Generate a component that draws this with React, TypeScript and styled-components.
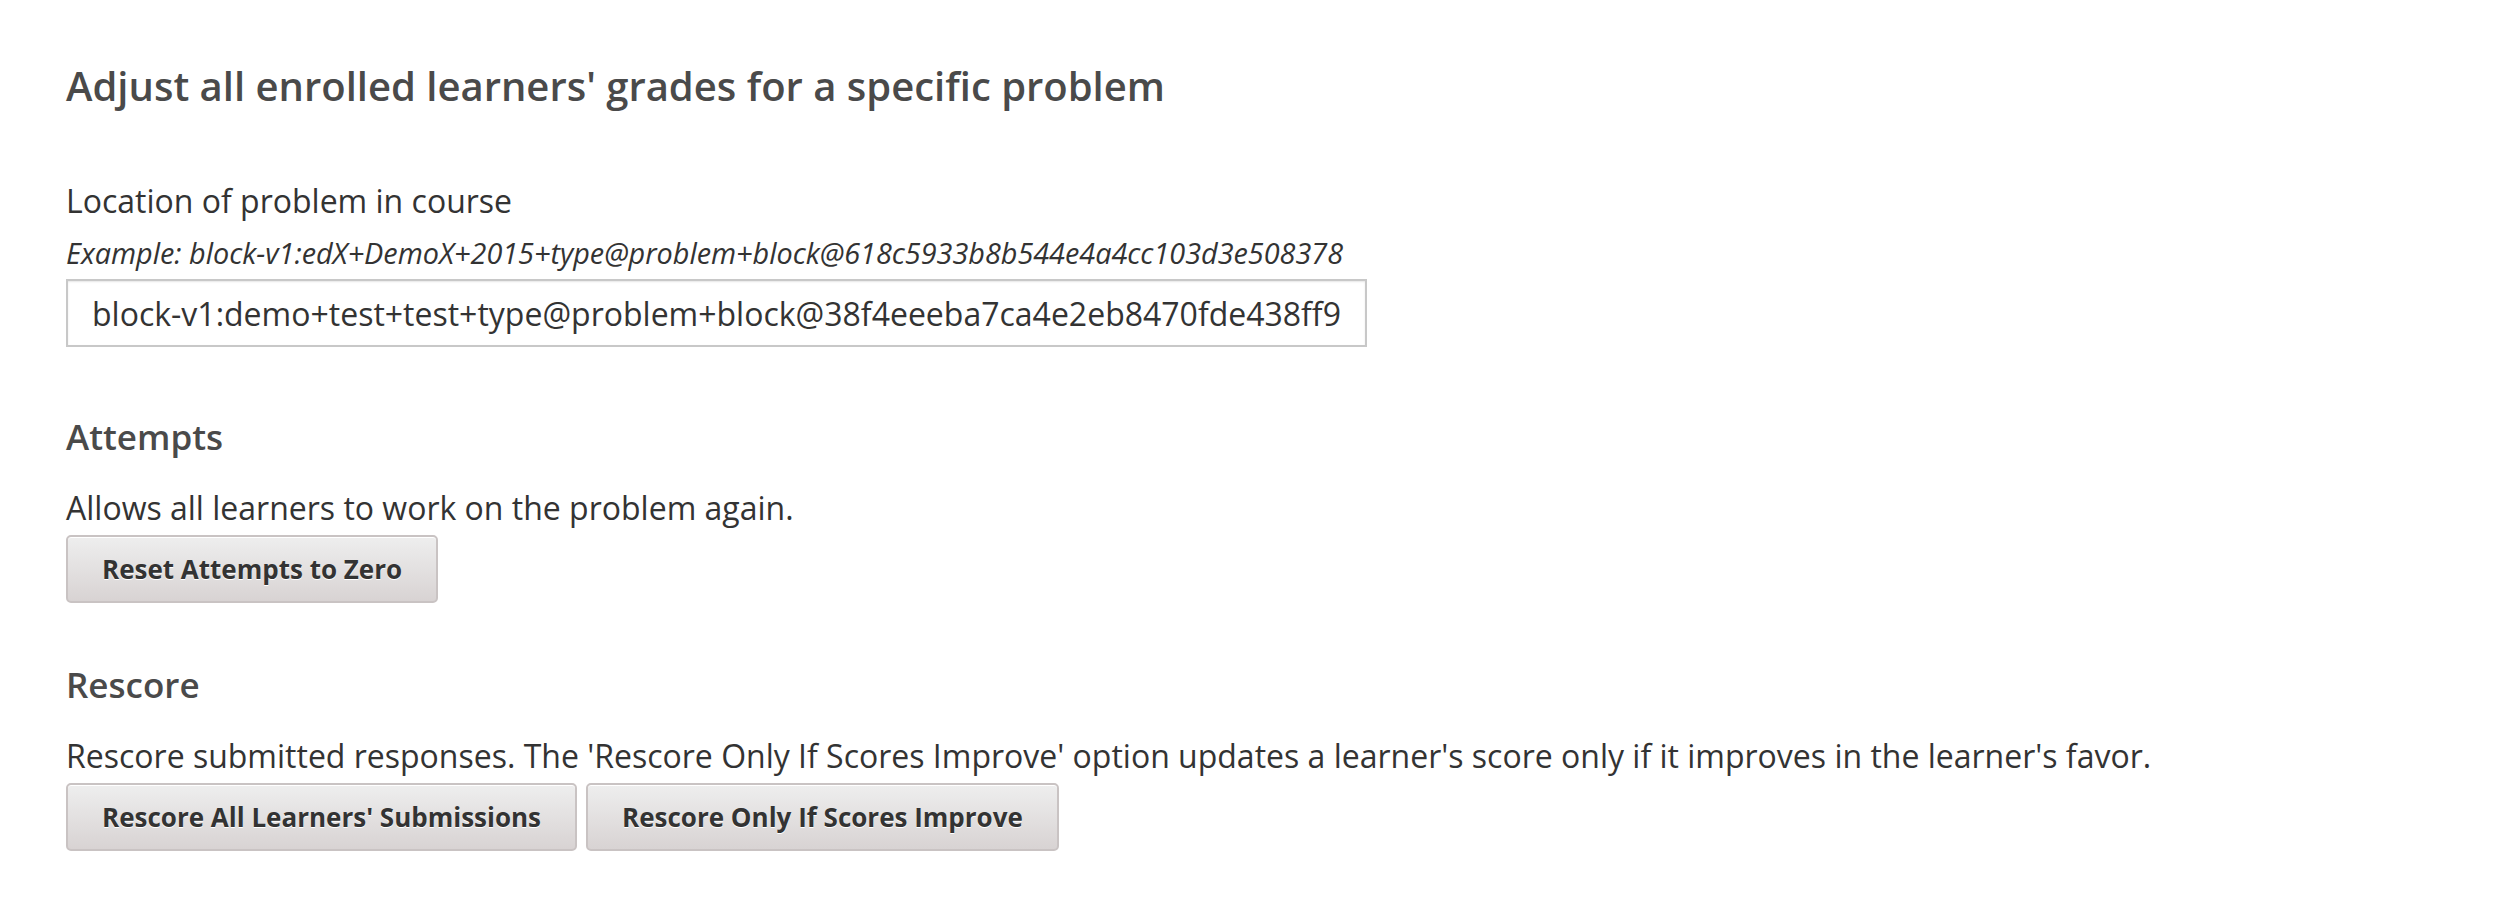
import React from "react";
import styled, { createGlobalStyle } from "styled-components";

const GlobalStyle = createGlobalStyle`
    html, body {
        margin: 0;
        padding: 0;
        background: #ffffff;
    }
    body {
        font-family: "Open Sans", "Noto Sans", sans-serif;
        color: #333333;
    }
`

const Content = styled.div`
    display: flex;
    flex-direction: column;
    align-items: flex-start;
    padding: 58px 66px 0 66px;
`

const Title = styled.h2`
    margin: 0;
    font-size: 40px;
    line-height: 56px;
    font-weight: 600;
    color: #4a4a4a;
`

const Field = styled.div`
    margin-top: 65px;
    margin-bottom: 8px;
    display: flex;
    flex-direction: column;
    align-items: flex-start;
`

const Label = styled.label`
    font-size: 32px;
    line-height: 44px;
    color: #333333;
`

const Hint = styled.span`
    margin-top: 10px;
    font-size: 28.8px;
    line-height: 40px;
    font-style: italic;
    color: #333333;
`

const TextInput = styled.input`
    box-sizing: border-box;
    margin-top: 6px;
    width: 1301px;
    height: 68px;
    padding: 0 24px;
    font-family: "Open Sans", "Noto Sans", sans-serif;
    font-size: 32px;
    color: #333333;
    border: 2px solid #c8c8c8;
    border-radius: 0;
    box-shadow: inset 0 1px 2px rgba(0, 0, 0, 0.1);
    outline: none;
`

const Section = styled.section`
    margin-top: 58px;
`

const SectionTitle = styled.h3`
    margin: 0;
    font-size: 35px;
    line-height: 48px;
    font-weight: 600;
    color: #4a4a4a;
`

const Description = styled.p`
    margin: 25px 0 0 0;
    font-size: 32px;
    line-height: 44px;
    color: #333333;
`

const ButtonRow = styled.div`
    display: flex;
    gap: 9px;
    margin-top: 5px;
`

const ActionButton = styled.button`
    box-sizing: border-box;
    height: 68px;
    padding: 0 34px;
    font-family: "Open Sans", "Noto Sans", sans-serif;
    font-size: 26px;
    font-weight: 700;
    color: #333333;
    text-shadow: 0 1px 0 #ffffff;
    background: linear-gradient(to bottom, #eeeeee 0%, #d8d3d3 100%);
    border: 2px solid #c9c3c3;
    border-radius: 5px;
    box-shadow: inset 0 1px 0 #ffffff;
    cursor: pointer;
`

export default function App() {
    return (
        <Content>
            <GlobalStyle />
            <Title>Adjust all enrolled learners' grades for a specific problem</Title>
            <Field>
                <Label htmlFor="problem-location">Location of problem in course</Label>
                <Hint>Example: block-v1:edX+DemoX+2015+type@problem+block@618c5933b8b544e4a4cc103d3e508378</Hint>
                <TextInput
                    id="problem-location"
                    defaultValue="block-v1:demo+test+test+type@problem+block@38f4eeeba7ca4e2eb8470fde438ff9"
                />
            </Field>
            <Section>
                <SectionTitle>Attempts</SectionTitle>
                <Description>Allows all learners to work on the problem again.</Description>
                <ButtonRow>
                    <ActionButton type="button">Reset Attempts to Zero</ActionButton>
                </ButtonRow>
            </Section>
            <Section>
                <SectionTitle>Rescore</SectionTitle>
                <Description>Rescore submitted responses. The 'Rescore Only If Scores Improve' option updates a learner's score only if it improves in the learner's favor.</Description>
                <ButtonRow>
                    <ActionButton type="button">Rescore All Learners' Submissions</ActionButton>
                    <ActionButton type="button">Rescore Only If Scores Improve</ActionButton>
                </ButtonRow>
            </Section>
        </Content>
    )
}
